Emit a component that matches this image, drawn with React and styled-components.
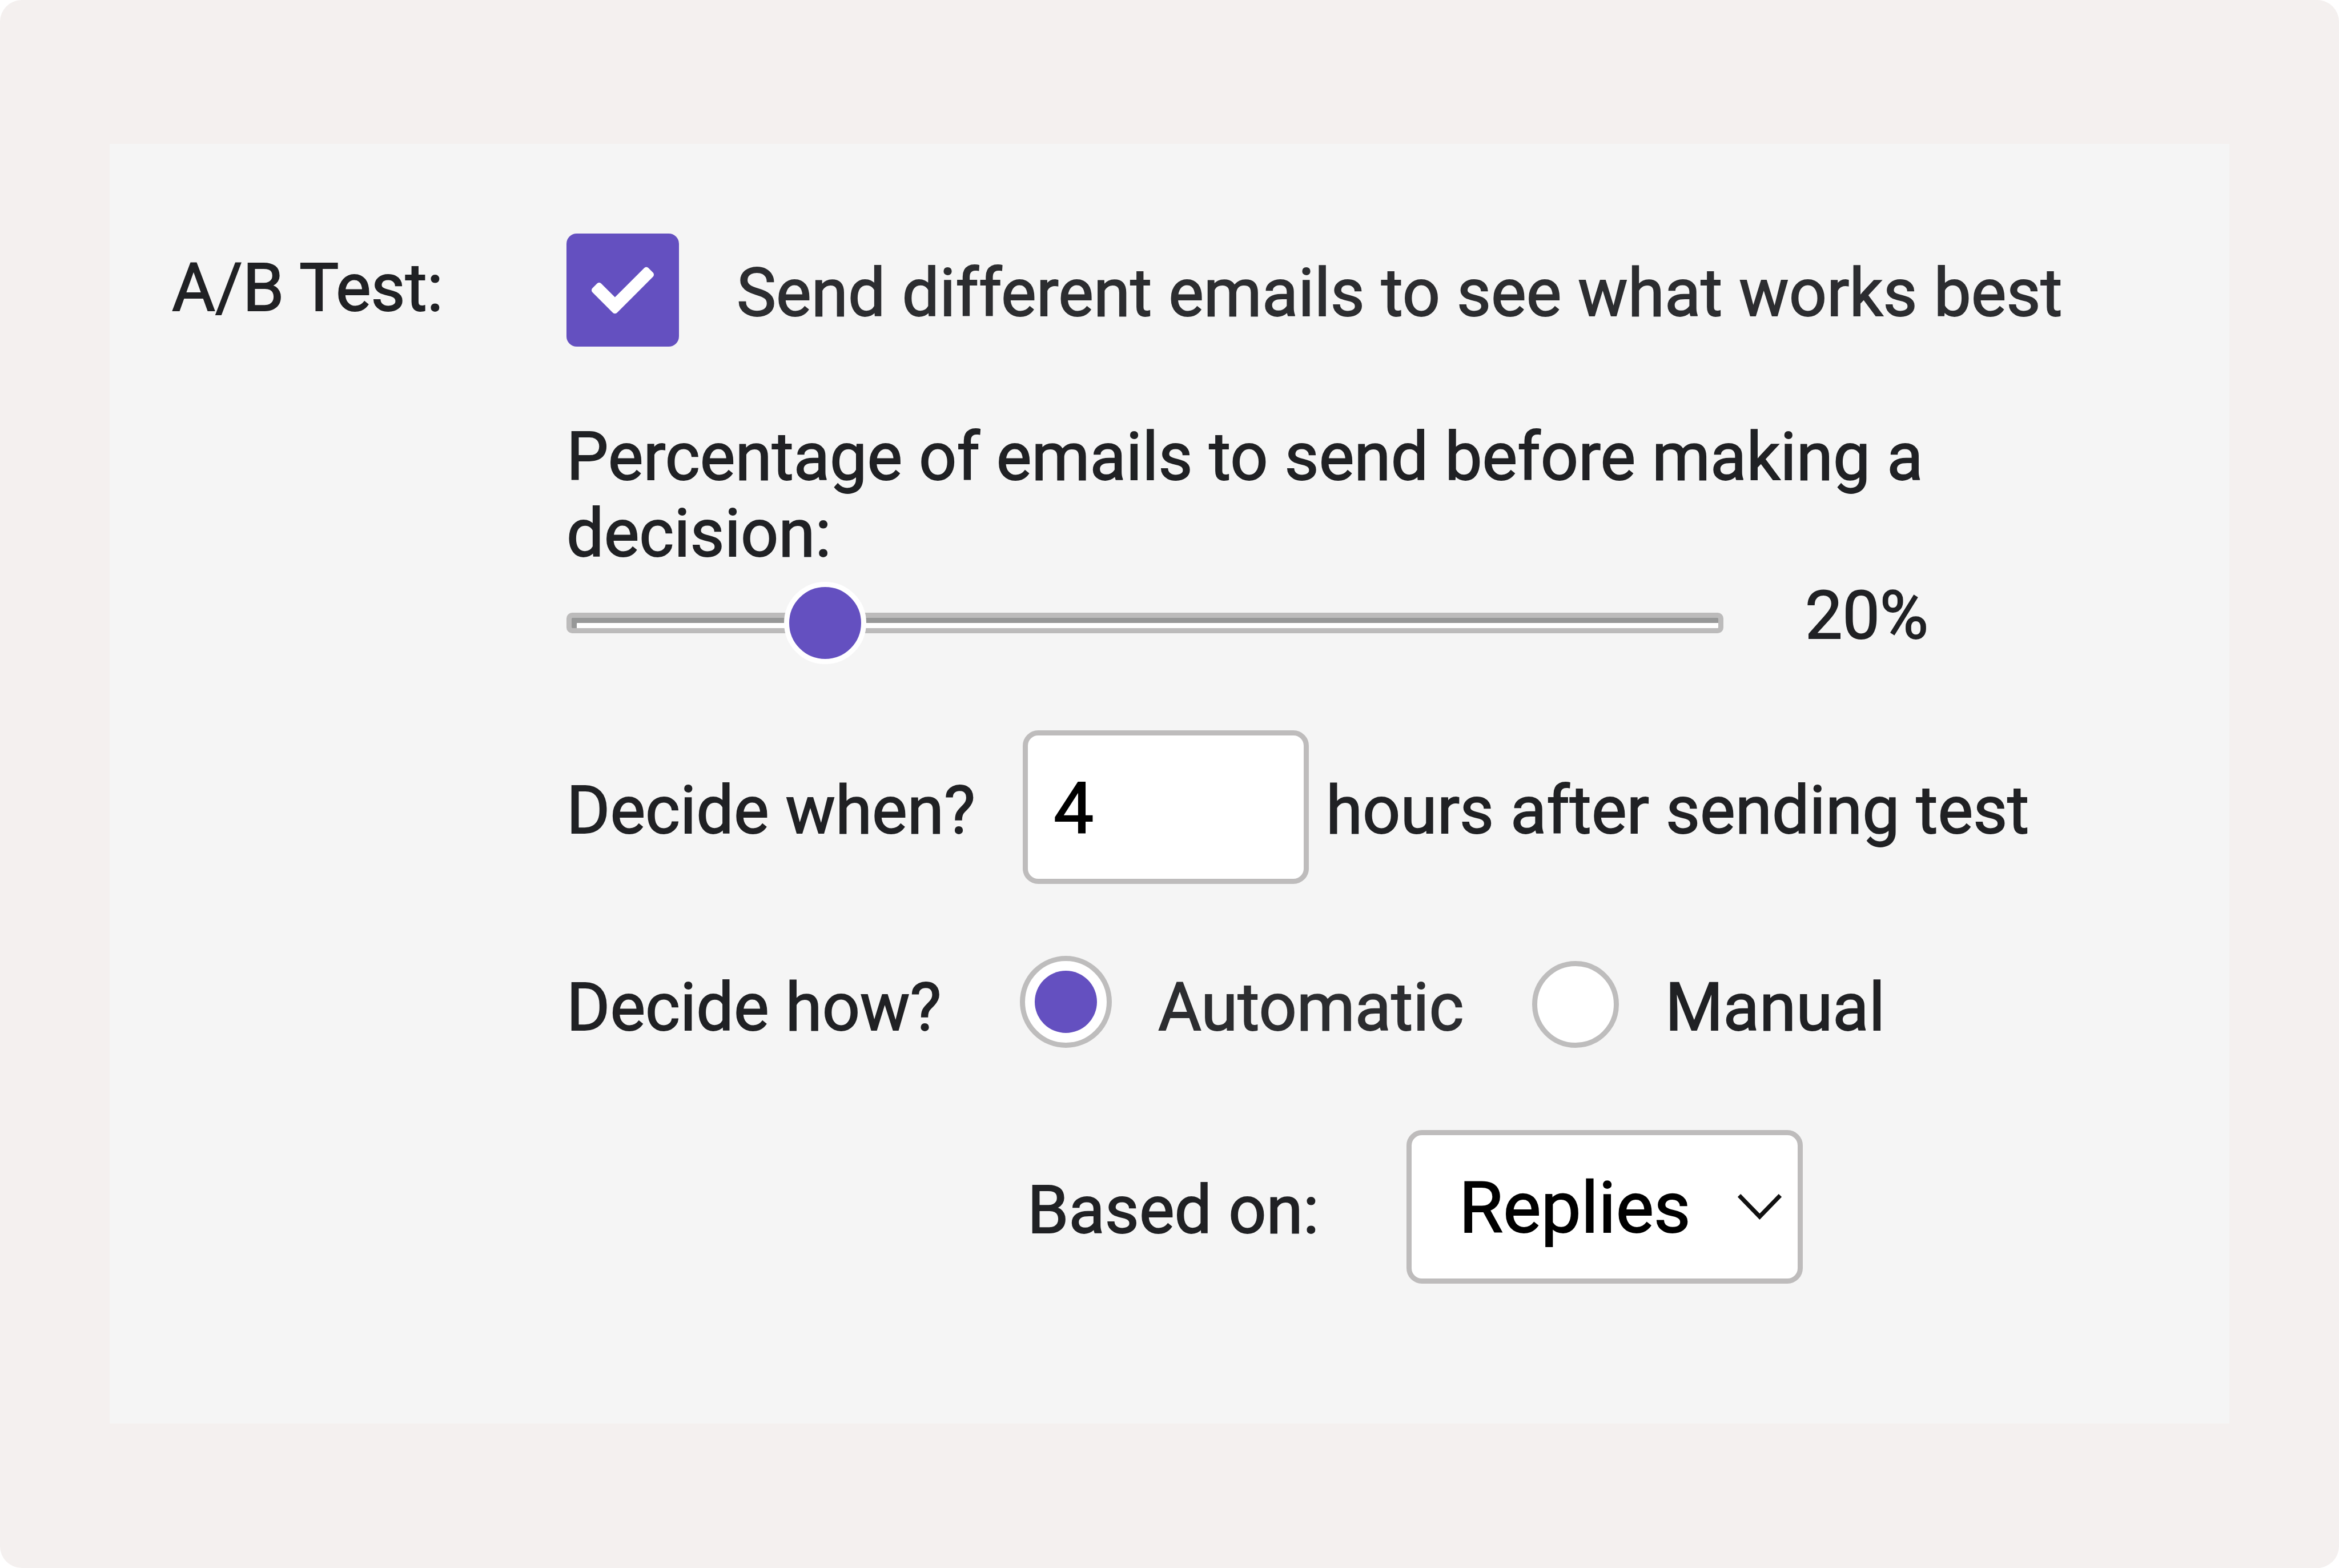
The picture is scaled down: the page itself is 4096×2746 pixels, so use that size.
import React, { useState } from "react";
import styled, { createGlobalStyle } from "styled-components";
import { FaCheck } from "react-icons/fa";

const GlobalStyle = createGlobalStyle`
  * {
    box-sizing: border-box;
  }
  body {
    margin: 0;
    background: #ffffff;
  }
`;
const Page = styled.div`
  width: 4096px;
  height: 2746px;
  padding: 252px 192px 253px 192px;
  border-radius: 38px;
  background: #f4f0ef;
  overflow: hidden;
  font-family: Roboto, sans-serif;
  font-size: 116.4px;
  line-height: 134px;
  color: #202124;
  -webkit-text-stroke: 1.8px currentColor;
`;
const Panel = styled.div`
  display: grid;
  grid-template-columns: 691px 1fr;
  height: 100%;
  padding: 157px 0 0 109px;
  background: #f5f5f5;
`;
const Heading = styled.div`
  padding-top: 28px;
`;
const Fields = styled.div`
  display: flex;
  flex-direction: column;
`;
const Row = styled.div`
  display: flex;
  align-items: center;
  height: ${(props) => props.$height}px;
  margin-top: ${(props) => props.$top || 0}px;
  padding-left: ${(props) => props.$indent || 0}px;
`;
const Label = styled.div`
  flex: none;
  width: ${(props) => (props.$width ? `${props.$width}px` : "auto")};
  margin-top: ${(props) => props.$drop || 0}px;
  white-space: nowrap;
  color: ${(props) => (props.$soft ? "#2c2d30" : "inherit")};
`;
const Question = styled.div`
  width: 2500px;
  margin-top: 126px;
`;
const CheckBox = styled.button`
  display: flex;
  align-items: center;
  justify-content: center;
  flex: none;
  width: 197px;
  height: 198px;
  margin-right: 101px;
  padding: 0;
  border: none;
  border-radius: 18px;
  background: #6450c0;
  color: #ffffff;
  font-size: 109px;
`;
const Track = styled.div`
  display: flex;
  align-items: center;
  flex: none;
  width: 2026px;
  height: 36px;
  margin-right: 143px;
  border: 9px solid #bcbbbb;
  border-radius: 10px;
  background: #ffffff;
  box-shadow: inset 9px 9px 0 #979898;
`;
const Thumb = styled.div`
  flex: none;
  width: 144px;
  height: 144px;
  border: 9px solid #ffffff;
  border-radius: 50%;
  background: #6450c0;
`;
const NumberInput = styled.input`
  flex: none;
  width: 501px;
  height: 269px;
  margin-right: 30px;
  padding: 5px 0 0 45px;
  border: 9px solid #bebcbc;
  border-radius: 27px;
  outline: none;
  background: #ffffff;
  font-family: inherit;
  font-size: 125.2px;
  color: #000000;
  -webkit-text-stroke: 1.8px currentColor;
`;
const Radio = styled.button`
  display: flex;
  align-items: center;
  justify-content: center;
  align-self: flex-end;
  flex: none;
  width: ${(props) => (props.$on ? 161 : 152)}px;
  height: ${(props) => (props.$on ? 161 : 152)}px;
  margin-right: 81px;
  padding: 0;
  border: 9px solid #bebdbd;
  border-radius: 50%;
  background: #ffffff;
  &::after {
    content: "";
    display: ${(props) => (props.$on ? "block" : "none")};
    width: 109px;
    height: 109px;
    border-radius: 50%;
    background: #6450c0;
  }
`;
const Select = styled.div`
  display: flex;
  align-items: center;
  justify-content: space-between;
  flex: none;
  width: 694px;
  height: 269px;
  padding: 0 28px 0 83px;
  border: 9px solid #bebcbc;
  border-radius: 27px;
  background: #ffffff;
  font-size: 125.2px;
  color: #000000;
`;

// travel of the thumb inside the track, in px
const TRAVEL = 1860;

const Chevron = () => (
  <svg width="77" height="47" viewBox="0 0 77 47" fill="none">
    <path d="M2.5 3.5L38.5 40.5L74.5 3.5" stroke="#111111" strokeWidth="7.5" />
  </svg>
);

export default function App() {
  const [enabled, setEnabled] = useState(true);
  const [percent] = useState(20);
  const [hours, setHours] = useState("4");
  const [how, setHow] = useState("automatic");

  return (
    <Page>
      <GlobalStyle />
      <Panel>
        <Heading>A/B Test:</Heading>
        <Fields>
          <Row $height={198}>
            <CheckBox onClick={() => setEnabled(!enabled)}>
              {enabled && <FaCheck />}
            </CheckBox>
            <Label $soft $drop={10}>
              Send different emails to see what works best
            </Label>
          </Row>
          <Question>
            Percentage of emails to send before making a decision:
          </Question>
          <Row $height={144} $top={18}>
            <Track>
              <Thumb style={{ marginLeft: (TRAVEL * percent) / 100 }} />
            </Track>
            <Label $drop={-26}>{percent}%</Label>
          </Row>
          <Row $height={269} $top={116}>
            <Label $width={799} $drop={11}>
              Decide when?
            </Label>
            <NumberInput
              value={hours}
              onChange={(e) => setHours(e.target.value)}
            />
            <Label $drop={11}>hours after sending test</Label>
          </Row>
          <Row $height={161} $top={126}>
            <Label $width={794} $drop={18}>
              Decide how?
            </Label>
            <Radio
              $on={how === "automatic"}
              onClick={() => setHow("automatic")}
            />
            <Label $soft={how === "automatic"} $width={655} $drop={18}>
              Automatic
            </Label>
            <Radio $on={how === "manual"} onClick={() => setHow("manual")} />
            <Label $soft={how === "manual"} $drop={18}>
              Manual
            </Label>
          </Row>
          <Row $height={269} $top={144} $indent={807}>
            <Label $width={664} $drop={10}>
              Based on:
            </Label>
            <Select>
              <Label $drop={4}>Replies</Label>
              <Chevron />
            </Select>
          </Row>
        </Fields>
      </Panel>
    </Page>
  );
}
